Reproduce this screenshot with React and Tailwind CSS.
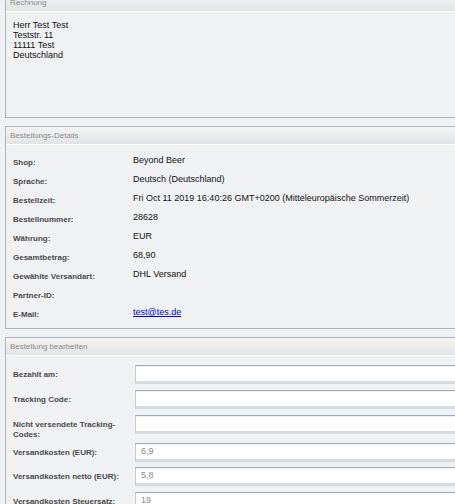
import React from 'react';

const details = [
  { label: 'Shop:', value: 'Beyond Beer' },
  { label: 'Sprache:', value: 'Deutsch (Deutschland)' },
  { label: 'Bestellzeit:', value: 'Fri Oct 11 2019 16:40:26 GMT+0200 (Mitteleuropäische Sommerzeit)' },
  { label: 'Bestellnummer:', value: '28628' },
  { label: 'Währung:', value: 'EUR' },
  { label: 'Gesamtbetrag:', value: '68,90' },
  { label: 'Gewählte Versandart:', value: 'DHL Versand' },
  { label: 'Partner-ID:', value: '' },
  { label: 'E-Mail:', value: 'test@tes.de', link: true },
];

const fields = [
  { label: 'Bezahlt am:', value: '', h: 'h-[25px]' },
  { label: 'Tracking Code:', value: '', h: 'h-[25px]' },
  { label: 'Nicht versendete Tracking-Codes:', value: '', h: 'h-[28px]' },
  { label: 'Versandkosten (EUR):', value: '6,9', h: 'h-[24px]' },
  { label: 'Versandkosten netto (EUR):', value: '5,8', h: 'h-[25px]' },
  { label: 'Versandkosten Steuersatz:', value: '19', h: 'h-[25px]' },
];

const Panel = ({ title, className = '', children }) => (
  <div className={`w-[600px] border border-[#a9b5c1] ${className}`}>
    <div className="h-[18px] flex items-center pt-[1px] pl-[4px] text-[8px] text-[#8a8a8a] bg-gradient-to-b from-[#f4f4f4] to-[#e2e3e5] border-b border-white">
      {title}
    </div>
    <div className="bg-[#eff1f3]">{children}</div>
  </div>
);

export default function App() {
  return (
    <div
      className="w-[455px] h-[504px] overflow-hidden bg-[#eff1f3] text-[#111]"
      style={{ fontFamily: '"Liberation Sans", Arial, sans-serif' }}
    >
      <div className="pl-[5px] -mt-[7px]">
        <Panel title="Rechnung">
          <div className="h-[105px] pt-[8px] pl-[7px] text-[9px] leading-[10px]">
            <div>Herr Test Test</div>
            <div>Teststr. 11</div>
            <div>11111 Test</div>
            <div>Deutschland</div>
          </div>
        </Panel>

        <Panel title="Bestellungs-Details" className="mt-[8px]">
          <div className="pt-[8px] pb-[4px] pl-[7px]">
            {details.map((d) => (
              <div key={d.label} className="h-[19px] flex">
                <div className="w-[120px] pt-[5px] text-[8px] leading-[10px] font-bold text-[#4a4a4a]">
                  {d.label}
                </div>
                <div className="pt-[2px] text-[9px] leading-[10px] whitespace-nowrap">
                  {d.link ? (
                    <a href="#" className="text-[#0000ee] underline">{d.value}</a>
                  ) : (
                    d.value
                  )}
                </div>
              </div>
            ))}
          </div>
        </Panel>

        <Panel title="Bestellung bearbeiten" className="mt-[8px]">
          <div className="pt-[9px] pl-[7px]">
            {fields.map((f) => (
              <div key={f.label} className={`${f.h} flex items-start`}>
                <div className="w-[122px] pt-[5px] pr-[6px] text-[8px] leading-[10px] font-bold text-[#4a4a4a]">
                  {f.label}
                </div>
                <div className="w-[400px] h-[19px] bg-white border border-[#c3cbd3] border-t-[#9fabb7] border-b-[3px] border-b-[#d6dbe0] shadow-[inset_0_1px_1px_rgba(0,0,0,0.06)] pl-[5px] text-[9px] leading-[15px] text-[#8a8a8a]">
                  {f.value}
                </div>
              </div>
            ))}
          </div>
        </Panel>
      </div>
    </div>
  );
}
